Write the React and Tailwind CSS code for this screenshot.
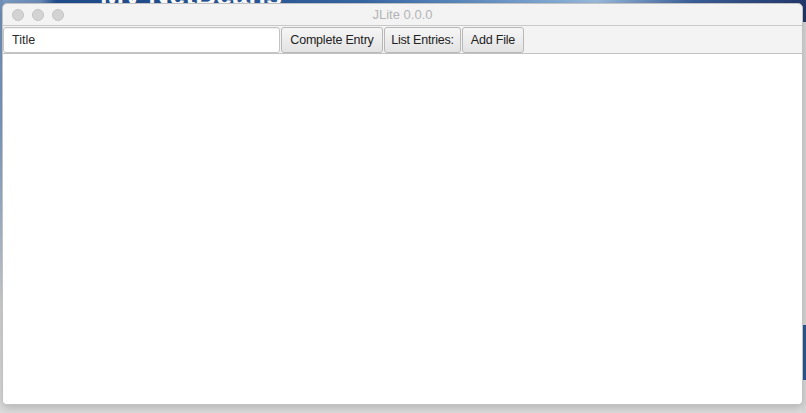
const buttons = [
  { label: 'Complete Entry', w: 'w-[102px]' },
  { label: 'List Entries:', w: 'w-[77px]' },
  { label: 'Add File', w: 'w-[62px]' },
];

function TrafficLights() {
  return (
    <div className="flex items-center gap-[8px] pl-[9px]">
      <span className="block h-[12px] w-[12px] rounded-full bg-[#d3d3d3] border border-[#c4c4c4]" />
      <span className="block h-[12px] w-[12px] rounded-full bg-[#d3d3d3] border border-[#c4c4c4]" />
      <span className="block h-[12px] w-[12px] rounded-full bg-[#d3d3d3] border border-[#c4c4c4]" />
    </div>
  );
}

function Desktop() {
  return (
    <>
      <div className="absolute inset-x-0 top-0 h-[30px] bg-[linear-gradient(to_right,#7c9bc2_0%,#6a8cb8_5%,#214d8e_7%,#234f8f_22%,#3767a6_45%,#7fa8d3_68%,#9bbbdc_74%,#3a5f98_86%,#23386c_100%)]" />
      <div className="absolute left-0 top-0 h-[413px] w-[3px] bg-[linear-gradient(to_bottom,#6f90ba_0%,#7d9cc2_30%,#a9b9cc_55%,#d3d3d3_75%,#dcdcdc_100%)]" />
      <div className="absolute right-0 top-0 flex h-[413px] w-[4px] flex-col">
        <div className="h-[22px] bg-[#22386a]" />
        <div className="h-[303px] bg-[#d6d6d6]" />
        <div className="h-[55px] bg-[#2a5896]" />
        <div className="flex-1 bg-[#d8d8d8]" />
      </div>
      <div className="absolute left-[100px] top-[-19px] font-['Liberation_Sans',sans-serif] text-[29px] font-bold leading-none text-white">
        My NetBeans
      </div>
    </>
  );
}

export default function App() {
  return (
    <div className="relative h-[413px] w-[806px] overflow-hidden bg-[#dcdcdc] font-['Liberation_Sans',Arial,sans-serif]">
      <Desktop />
      <div className="absolute left-[2px] top-[3px] flex h-[402px] w-[801px] flex-col overflow-hidden rounded-[5px] border border-[#c2c2c2] bg-[#f3f3f3] shadow-[0_3px_8px_rgba(0,0,0,0.18)]">
        <div className="relative flex h-[22px] shrink-0 items-center border-b border-[#c9c9c9]">
          <TrafficLights />
          <div className="absolute inset-0 flex items-center justify-center text-[13px] text-[#b3b3b3]">
            JLite 0.0.0
          </div>
        </div>
        <div className="flex h-[27px] shrink-0 items-end gap-[1px]">
          <div className="flex h-[26px] w-[277px] items-center rounded-[3px] border border-[#c4c4c4] bg-white pl-[8px] text-[12.5px] text-[#2a2a2a] shadow-[inset_0_1px_0_rgba(0,0,0,0.06)]">
            Title
          </div>
          {buttons.map((b) => (
            <div
              key={b.label}
              className={`${b.w} flex h-[26px] items-center justify-center overflow-hidden whitespace-nowrap rounded-[3px] border border-[#b8b8b8] bg-[linear-gradient(#f6f6f6,#e3e3e3)] text-[12.5px] tracking-[-0.2px] text-[#222]`}
            >
              {b.label}
            </div>
          ))}
        </div>
        <div className="flex-1 border-t border-[#c2c2c2] bg-white" />
      </div>
    </div>
  );
}
